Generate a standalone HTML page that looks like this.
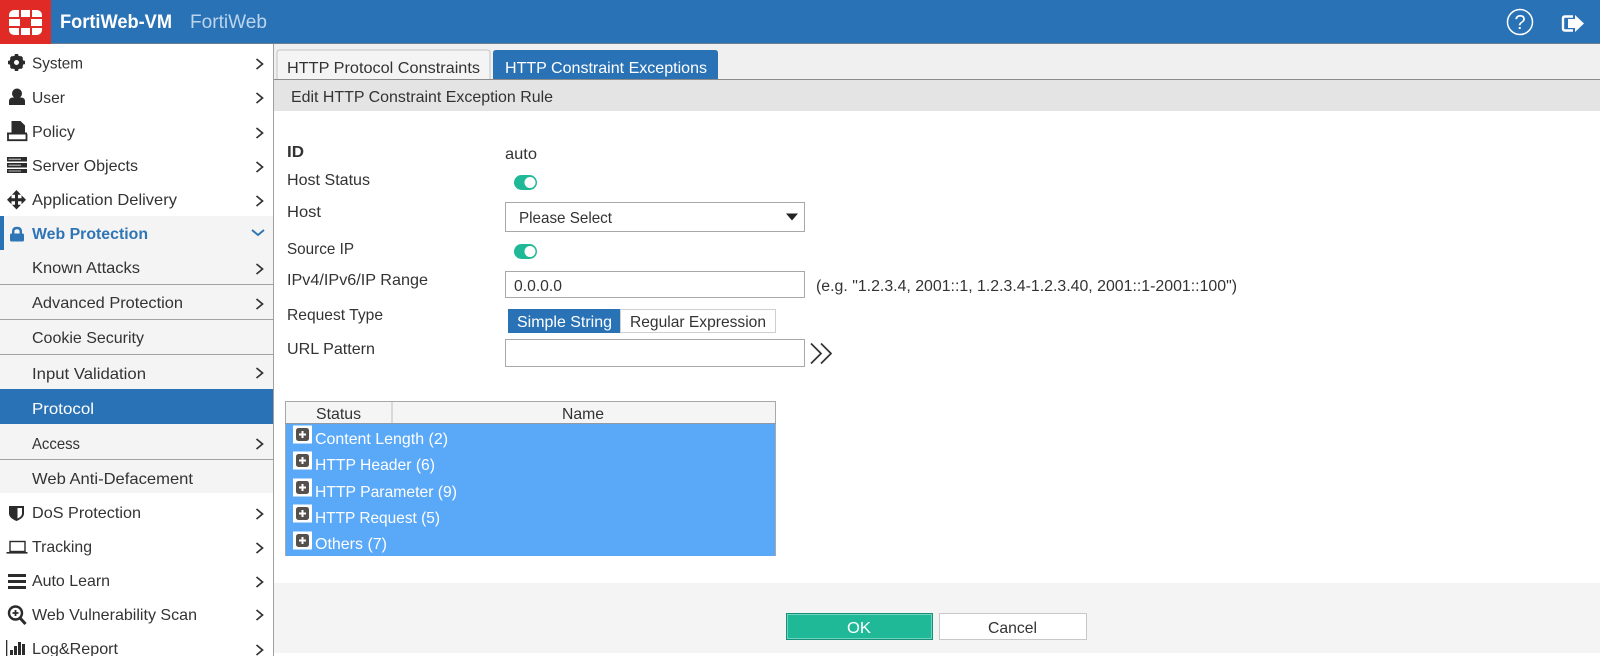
<!DOCTYPE html>
<html><head><meta charset="utf-8"><style>
html,body{margin:0;padding:0;background:#fff;width:1600px;height:656px;overflow:hidden}
svg{display:block}
text{font-family:"Liberation Sans",sans-serif;font-size:16px;fill:#333}
.w{fill:#fff}
</style></head><body>
<svg width="1600" height="656" viewBox="0 0 1600 656" xmlns="http://www.w3.org/2000/svg">
<rect width="1600" height="656" fill="#fff"/>
<!-- header -->
<rect width="1600" height="44" fill="#2a72b6"/>
<rect y="43" width="1600" height="1" fill="#6c7f92"/>
<rect width="51" height="44" fill="#e02a26"/>
<rect x="9" y="10" width="33" height="25" rx="5" fill="#fff"/>
<path d="M9 18H42M9 27H42M20 10V18M31 10V18M20 27V35M31 27V35" stroke="#e02a26" stroke-width="2" fill="none"/>
<path d="M20 18V27H31V18Z" fill="#e02a26"/>
<text x="60" y="28" class="w" style="font-size:19px;font-weight:bold" textLength="112" lengthAdjust="spacingAndGlyphs">FortiWeb-VM</text>
<text x="190" y="28" style="font-size:19px;fill:#bcd5ee" textLength="77" lengthAdjust="spacingAndGlyphs">FortiWeb</text>
<circle cx="1520" cy="22" r="12.500" fill="none" stroke="#fff" stroke-width="1.500"/>
<text x="1520" y="29" class="w" text-anchor="middle" style="font-size:20px">?</text>
<path d="M1573 16.500H1565Q1563 16.500 1563 18.500V28.500Q1563 30.500 1565 30.500H1573" fill="none" stroke="#fff" stroke-width="2.400"/>
<path d="M1568 19H1575V15L1584 23.500L1575 32V28H1568Z" fill="#fff"/>

<!-- sidebar -->
<rect x="0" y="216" width="273" height="277" fill="#f4f4f4"/>
<rect x="0" y="216" width="4" height="34" fill="#2a72b6"/>
<rect x="0" y="389" width="273" height="35" fill="#2a72b6"/>
<path d="M0 284.500H273M0 319.500H273M0 354.500H273M0 459.500H273" stroke="#a3a3a3"/>
<rect x="273" y="44" width="1" height="612" fill="#a0a0a0"/>

<text x="32" y="68.500" textLength="51" lengthAdjust="spacingAndGlyphs">System</text>
<text x="32" y="103" textLength="33" lengthAdjust="spacingAndGlyphs">User</text>
<text x="32" y="137" textLength="43" lengthAdjust="spacingAndGlyphs">Policy</text>
<text x="32" y="171" textLength="106" lengthAdjust="spacingAndGlyphs">Server Objects</text>
<text x="32" y="205" textLength="145" lengthAdjust="spacingAndGlyphs">Application Delivery</text>
<text x="32" y="239" style="font-weight:bold;fill:#2e75b6" textLength="116" lengthAdjust="spacingAndGlyphs">Web Protection</text>
<text x="32" y="273" textLength="108" lengthAdjust="spacingAndGlyphs">Known Attacks</text>
<text x="32" y="308" textLength="151" lengthAdjust="spacingAndGlyphs">Advanced Protection</text>
<text x="32" y="343" textLength="112" lengthAdjust="spacingAndGlyphs">Cookie Security</text>
<text x="32" y="379" textLength="114" lengthAdjust="spacingAndGlyphs">Input Validation</text>
<text x="32" y="414" class="w" textLength="62" lengthAdjust="spacingAndGlyphs">Protocol</text>
<text x="32" y="449" textLength="48" lengthAdjust="spacingAndGlyphs">Access</text>
<text x="32" y="484" textLength="161" lengthAdjust="spacingAndGlyphs">Web Anti-Defacement</text>
<text x="32" y="518" textLength="109" lengthAdjust="spacingAndGlyphs">DoS Protection</text>
<text x="32" y="552" textLength="60" lengthAdjust="spacingAndGlyphs">Tracking</text>
<text x="32" y="586" textLength="78" lengthAdjust="spacingAndGlyphs">Auto Learn</text>
<text x="32" y="620" textLength="165" lengthAdjust="spacingAndGlyphs">Web Vulnerability Scan</text>
<text x="32" y="654" textLength="86" lengthAdjust="spacingAndGlyphs">Log&amp;Report</text>

<!-- chevrons -->
<g fill="none" stroke="#333" stroke-width="1.700">
<path d="M256.500 59L262.500 64L256.500 69M256.500 93L262.500 98L256.500 103M256.500 128L262.500 133L256.500 138M256.500 162L262.500 167L256.500 172M256.500 196L262.500 201L256.500 206"/>
<path d="M256.500 264L262.500 269L256.500 274M256.500 299L262.500 304L256.500 309M256.500 368L262.500 373L256.500 378M256.500 439L262.500 444L256.500 449"/>
<path d="M256.500 509L262.500 514L256.500 519M256.500 543L262.500 548L256.500 553M256.500 577L262.500 582L256.500 587M256.500 610L262.500 615L256.500 620M256.500 645L262.500 650L256.500 655"/>
</g>
<path d="M252 230L258 235L264 230" fill="none" stroke="#2e75b6" stroke-width="1.900"/>

<!-- icons -->
<g fill="#2b2b2b">
<!-- gear -->
<circle cx="16.500" cy="62.500" r="4.800" fill="none" stroke="#2b2b2b" stroke-width="4.600"/>
<path d="M14.800 54H18.200V58H14.800ZM14.800 67H18.200V71H14.800ZM8 60.800H12V64.200H8ZM21 60.800H25V64.200H21Z"/>
<path d="M9.800 58L12 55.800L15 58.800L12.800 61ZM21 55.800L23.200 58L20.200 61L18 58.800ZM9.800 67L12.800 64L15 66.200L12 69.200ZM23.200 67L21 69.200L18 66.200L20.200 64Z"/>
<!-- user -->
<ellipse cx="17" cy="93.500" rx="5" ry="5"/>
<path d="M9 105V101.500Q9 97.500 13 97.500H21Q25 97.500 25 101.500V105Z"/>
<!-- policy -->
<path d="M11.500 121H20.500L25 125.500V134H11.500Z"/>
<path d="M8 134V140.200H26.500V134" fill="none" stroke="#2b2b2b" stroke-width="1.800"/>
<rect x="7" y="132.500" width="20" height="2"/>
<!-- server -->
<path d="M7 157H27V161.500H7ZM7 163H27V167.500H7ZM7 169H27V173H7Z"/>
<path d="M8.500 159.200H21M8.500 165.200H21M8.500 171H21" stroke="#e8e8e8" stroke-width=".8"/>
<!-- move -->
<path d="M16.500 190L21 194.800H18V197.500H15V194.800H12Z"/>
<path d="M16.500 209.500L21 204.700H18V202H15V204.700H12Z"/>
<path d="M7 199.800L11.500 195.300V198.300H21.500V195.300L26 199.800L21.500 204.300V201.300H11.500V204.300Z"/>
<rect x="15" y="195" width="3" height="10"/>
<!-- lock -->
<rect x="10" y="233.500" width="14" height="8" rx="1.500" fill="#2e75b6"/>
<path d="M13.200 234V231.500Q13.200 228 17 228Q20.800 228 20.800 231.500V234" fill="none" stroke="#2e75b6" stroke-width="2.400"/>
<!-- shield -->
<path d="M9 506H24V513.500Q24 518 16.500 521Q9 518 9 513.500Z"/>
<path d="M17.500 508H22V513.500Q22 516.500 17.500 518.500Z" fill="#fff"/>
<!-- laptop -->
<rect x="10" y="541.500" width="15" height="10" fill="none" stroke="#2b2b2b" stroke-width="1.400"/>
<rect x="6.500" y="552" width="21" height="1.600"/>
<!-- hamburger -->
<rect x="8" y="574" width="18" height="3"/>
<rect x="8" y="580" width="18" height="3"/>
<rect x="8" y="586" width="18" height="3"/>
<!-- search -->
<circle cx="15.500" cy="613" r="6.500" fill="none" stroke="#2b2b2b" stroke-width="2.400"/>
<path d="M12.500 613H18.500M15.500 610V616" stroke="#2b2b2b" stroke-width="1.800"/>
<path d="M20 618L25.500 624" stroke="#2b2b2b" stroke-width="3"/>
<!-- chart -->
<rect x="6" y="640" width="1.300" height="16"/>
<rect x="10" y="650" width="3" height="5"/>
<rect x="14" y="646" width="3" height="9"/>
<rect x="18" y="642" width="3" height="13"/>
<rect x="22" y="644" width="3" height="11"/>
</g>

<!-- tab strip -->
<rect x="274" y="44" width="1326" height="35" fill="#f0f0f0"/>
<path d="M277 79V53Q277 50 280 50H487Q490 50 490 53V79" fill="#f4f4f4" stroke="#c4c4c4"/>
<path d="M493 79V53Q493 50 496 50H715Q718 50 718 53V79Z" fill="#2a72b6"/>
<rect x="274" y="79" width="1326" height="1" fill="#8c8c8c"/>
<rect x="274" y="80" width="1326" height="31" fill="#e4e4e4"/>
<text x="287" y="73" textLength="193" lengthAdjust="spacingAndGlyphs">HTTP Protocol Constraints</text>
<text x="505" y="73" class="w" textLength="202" lengthAdjust="spacingAndGlyphs">HTTP Constraint Exceptions</text>
<text x="291" y="102" textLength="262" lengthAdjust="spacingAndGlyphs">Edit HTTP Constraint Exception Rule</text>

<!-- form -->
<text x="287" y="157" style="font-weight:bold" textLength="17" lengthAdjust="spacingAndGlyphs">ID</text>
<text x="505" y="159" textLength="32" lengthAdjust="spacingAndGlyphs">auto</text>
<text x="287" y="185" textLength="83" lengthAdjust="spacingAndGlyphs">Host Status</text>
<rect x="514" y="175" width="23" height="15" rx="7.500" fill="#20b997"/>
<circle cx="530" cy="182.500" r="5.500" fill="#fff"/>
<text x="287" y="217" textLength="34" lengthAdjust="spacingAndGlyphs">Host</text>
<rect x="505.500" y="202.500" width="299" height="29" fill="#fff" stroke="#a8a8a8"/>
<text x="519" y="223" textLength="93" lengthAdjust="spacingAndGlyphs">Please Select</text>
<path d="M786 213.500H798L792 220.500Z" fill="#222"/>
<text x="287" y="254" textLength="67" lengthAdjust="spacingAndGlyphs">Source IP</text>
<rect x="514" y="244" width="23" height="15" rx="7.500" fill="#20b997"/>
<circle cx="530" cy="251.500" r="5.500" fill="#fff"/>
<text x="287" y="285" textLength="141" lengthAdjust="spacingAndGlyphs">IPv4/IPv6/IP Range</text>
<rect x="505.500" y="271.500" width="299" height="26" fill="#fff" stroke="#a8a8a8"/>
<text x="514" y="291" textLength="48" lengthAdjust="spacingAndGlyphs">0.0.0.0</text>
<text x="816" y="291" style="font-size:15.500px" textLength="421" lengthAdjust="spacingAndGlyphs">(e.g. "1.2.3.4, 2001::1, 1.2.3.4-1.2.3.40, 2001::1-2001::100")</text>
<text x="287" y="320" textLength="96" lengthAdjust="spacingAndGlyphs">Request Type</text>
<rect x="620.500" y="309.500" width="155" height="23" fill="#fff" stroke="#cfcfcf"/>
<rect x="508" y="309" width="112" height="24" fill="#2a72b6"/>
<text x="517" y="327" class="w" textLength="95" lengthAdjust="spacingAndGlyphs">Simple String</text>
<text x="630" y="327" textLength="136" lengthAdjust="spacingAndGlyphs">Regular Expression</text>
<text x="287" y="354" textLength="88" lengthAdjust="spacingAndGlyphs">URL Pattern</text>
<rect x="505.500" y="339.500" width="299" height="27" fill="#fff" stroke="#a8a8a8"/>
<path d="M811 343.500L821 353.500L811 363.500M821 343.500L831 353.500L821 363.500" fill="none" stroke="#333" stroke-width="1.700"/>

<!-- table -->
<rect x="285" y="401" width="491" height="22" fill="#f5f5f5"/>
<rect x="285" y="423" width="491" height="133" fill="#5aa8f8"/>
<path d="M285.500 423V401.500H775.500V556" fill="none" stroke="#a8a8a8"/>
<path d="M285.500 401V556" stroke="#a8a8a8"/>
<rect x="285" y="423" width="491" height="1" fill="#8f9aa5"/>
<rect x="391.500" y="402" width="1" height="21" fill="#bdbdbd"/>
<text x="316" y="419" textLength="45" lengthAdjust="spacingAndGlyphs">Status</text>
<text x="562" y="419" textLength="42" lengthAdjust="spacingAndGlyphs">Name</text>
<g fill="#fff">
<rect x="293" y="425.500" width="19" height="18"/>
<rect x="293" y="451.500" width="19" height="18"/>
<rect x="293" y="478.500" width="19" height="18"/>
<rect x="293" y="504.500" width="19" height="18"/>
<rect x="293" y="531.500" width="19" height="18"/>
</g>
<g fill="#55504c">
<rect x="296" y="428" width="13" height="13" rx="2.500"/>
<rect x="296" y="454" width="13" height="13" rx="2.500"/>
<rect x="296" y="481" width="13" height="13" rx="2.500"/>
<rect x="296" y="507" width="13" height="13" rx="2.500"/>
<rect x="296" y="534" width="13" height="13" rx="2.500"/>
</g>
<path d="M299 434.500H306M302.500 431V438M299 460.500H306M302.500 457V464M299 487.500H306M302.500 484V491M299 513.500H306M302.500 510V517M299 540.500H306M302.500 537V544" stroke="#fff" stroke-width="2"/>
<text x="315" y="444" class="w" textLength="133" lengthAdjust="spacingAndGlyphs">Content Length (2)</text>
<text x="315" y="470" class="w" textLength="120" lengthAdjust="spacingAndGlyphs">HTTP Header (6)</text>
<text x="315" y="497" class="w" textLength="142" lengthAdjust="spacingAndGlyphs">HTTP Parameter (9)</text>
<text x="315" y="523" class="w" textLength="125" lengthAdjust="spacingAndGlyphs">HTTP Request (5)</text>
<text x="315" y="549" class="w" textLength="72" lengthAdjust="spacingAndGlyphs">Others (7)</text>

<!-- footer -->
<rect x="274" y="583" width="1326" height="70" fill="#f4f4f4"/>
<rect x="786.500" y="613.500" width="146" height="26" fill="#20b997" stroke="#17907a"/>
<rect x="787.500" y="614.500" width="144" height="24" fill="none" stroke="#6fd3bd"/>
<text x="847" y="633" class="w" style="font-size:16px" textLength="24" lengthAdjust="spacingAndGlyphs">OK</text>
<rect x="939.500" y="613.500" width="147" height="26" fill="#fff" stroke="#c8c8c8"/>
<text x="988" y="633" textLength="49" lengthAdjust="spacingAndGlyphs">Cancel</text>
</svg>
</body></html>
